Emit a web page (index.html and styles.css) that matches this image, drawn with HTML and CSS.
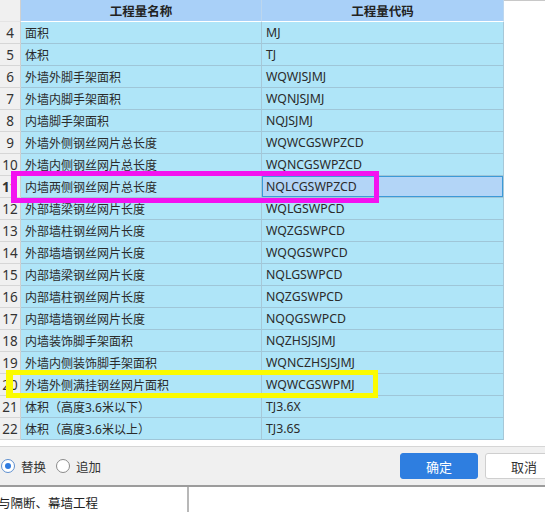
FILE: index.html
```html
<!DOCTYPE html>
<html lang="zh-CN">
<head>
<meta charset="utf-8">
<title>工程量</title>
<link rel="stylesheet" href="styles.css">
</head>
<body>
<div class="screen">
  <div class="top">
    <div class="grid">
      <div class="hd corner"></div><div class="hd">工程量名称</div><div class="hd">工程量代码</div>
      <div class="num">4</div><div class="cell">面积</div><div class="cell code">MJ</div>
      <div class="num">5</div><div class="cell">体积</div><div class="cell code">TJ</div>
      <div class="num">6</div><div class="cell">外墙外脚手架面积</div><div class="cell code">WQWJSJMJ</div>
      <div class="num">7</div><div class="cell">外墙内脚手架面积</div><div class="cell code">WQNJSJMJ</div>
      <div class="num">8</div><div class="cell">内墙脚手架面积</div><div class="cell code">NQJSJMJ</div>
      <div class="num">9</div><div class="cell">外墙外侧钢丝网片总长度</div><div class="cell code">WQWCGSWPZCD</div>
      <div class="num">10</div><div class="cell">外墙内侧钢丝网片总长度</div><div class="cell code">WQNCGSWPZCD</div>
      <div class="num bold">11</div><div class="cell">内墙两侧钢丝网片总长度</div><div class="cell code selected">NQLCGSWPZCD</div>
      <div class="num">12</div><div class="cell">外部墙梁钢丝网片长度</div><div class="cell code">WQLGSWPCD</div>
      <div class="num">13</div><div class="cell">外部墙柱钢丝网片长度</div><div class="cell code">WQZGSWPCD</div>
      <div class="num">14</div><div class="cell">外部墙墙钢丝网片长度</div><div class="cell code">WQQGSWPCD</div>
      <div class="num">15</div><div class="cell">内部墙梁钢丝网片长度</div><div class="cell code">NQLGSWPCD</div>
      <div class="num">16</div><div class="cell">内部墙柱钢丝网片长度</div><div class="cell code">NQZGSWPCD</div>
      <div class="num">17</div><div class="cell">内部墙墙钢丝网片长度</div><div class="cell code">NQQGSWPCD</div>
      <div class="num">18</div><div class="cell">内墙装饰脚手架面积</div><div class="cell code">NQZHSJSJMJ</div>
      <div class="num">19</div><div class="cell">外墙内侧装饰脚手架面积</div><div class="cell code">WQNCZHSJSJMJ</div>
      <div class="num">20</div><div class="cell">外墙外侧满挂钢丝网片面积</div><div class="cell code">WQWCGSWPMJ</div>
      <div class="num">21</div><div class="cell">体积（高度3.6米以下）</div><div class="cell code">TJ3.6X</div>
      <div class="num">22</div><div class="cell">体积（高度3.6米以上）</div><div class="cell code">TJ3.6S</div>
    </div>
    <div class="side"></div>
  </div>
  <div class="gap"></div>
  <div class="footer">
    <div class="radios">
      <label class="radio"><span class="dot on"></span>替换</label>
      <label class="radio"><span class="dot"></span>追加</label>
    </div>
    <div class="buttons">
      <button class="btn primary">确定</button>
      <button class="btn">取消</button>
    </div>
  </div>
  <div class="below">
    <div class="below-left">与隔断、幕墙工程</div>
    <div class="below-right"></div>
  </div>
  <div class="mark magenta"></div>
  <div class="mark yellow"></div>
</div>
</body>
</html>
```
FILE: styles.css
```css
* { box-sizing: border-box; }
html, body { margin: 0; padding: 0; background: #fff; }
body {
  font-family: "Noto Sans", "Noto Sans CJK SC", sans-serif;
  font-size: 12px;
  color: #2b2b2b;
}
.screen {
  position: relative;
  width: 545px;
  height: 512px;
  overflow: hidden;
  display: flex;
  flex-direction: column;
}
.top {
  display: flex;
  height: 440px;
}
.grid {
  display: grid;
  grid-template-columns: 21px 241px 242px;
  grid-auto-rows: 22px;
  width: 504px;
}
.side {
  flex: 1;
  border-top: 1px solid #c8c8c8;
  background: #fff;
}
.hd {
  background: #a9d0f8;
  border-bottom: 1px solid #ffffff;
  border-right: 1px solid #bcd6ee;
  font-weight: bold;
  font-size: 12.5px;
  color: #222;
  display: flex;
  align-items: center;
  justify-content: center;
}
.hd.corner {
  background: #f0f0f0;
  border-right: 1px solid #d0d0d0;
  border-bottom: 1px solid #e4e4e4;
}
.num {
  background: #f0f0f0;
  border-right: 1px solid #cfcfcf;
  border-bottom: 1px solid #d6d6d6;
  font-size: 13.5px;
  color: #333;
  display: flex;
  align-items: center;
  justify-content: center;
  padding-top: 1px;
}
.num.bold { font-weight: bold; justify-content: flex-start; padding-left: 2px; }
.cell {
  background: #afe5f8;
  border-bottom: 1px solid #9fc6d8;
  border-right: 1px solid #a6c8d8;
  display: flex;
  align-items: center;
  padding-left: 4px;
  white-space: nowrap;
}
.cell.code { padding-left: 4px; font-size: 12.3px; }
.cell.selected {
  background: #b3d5f7;
  box-shadow: inset 0 0 0 1px #3c9ad8;
}
.gap { height: 7px; background: #fff; }
.footer {
  height: 44px;
  background: #f0f0f0;
  border-top: 1px solid #d6d6d6;
  border-bottom: 2px solid #9c9c9c;
  display: flex;
  align-items: center;
  justify-content: space-between;
}
.radios { display: flex; align-items: center; gap: 10px; padding-left: 1px; }
.radio { display: flex; align-items: center; gap: 6px; font-size: 12.5px; color: #333; }
.dot {
  width: 14px;
  height: 14px;
  border-radius: 50%;
  border: 1px solid #8a8a8a;
  background: #fff;
  display: inline-flex;
  align-items: center;
  justify-content: center;
}
.dot.on { border-color: #5d8fcf; }
.dot.on::after {
  content: "";
  width: 6px;
  height: 6px;
  border-radius: 50%;
  background: #2f7be0;
}
.buttons { display: flex; gap: 7px; margin-right: -18px; }
.btn {
  width: 78px;
  height: 26px;
  border-radius: 3px;
  border: 1px solid #cfcfcf;
  background: #fff;
  font-family: "Noto Sans CJK SC", sans-serif;
  font-size: 13px;
  color: #333;
  padding: 0;
}
.btn.primary {
  background: #2e7ee0;
  border-color: #2e7ee0;
  color: #fff;
}
.below { flex: 1; display: flex; }
.below-left {
  width: 191px;
  border-right: 2px solid #b8b8b8;
  font-size: 12.5px;
  padding-top: 6px;
  color: #222;
  white-space: nowrap;
  margin-left: -2px;
}
.below-right { flex: 1; }
.mark { position: absolute; pointer-events: none; }
.mark.magenta {
  left: 11px; top: 171px; width: 368px; height: 32px;
  border: 5px solid #f312f0;
  border-left-width: 6px;
}
.mark.yellow {
  left: 6px; top: 370px; width: 372px; height: 28px;
  border: 5px solid #fbfb00;
  border-left-width: 7px;
}
```
